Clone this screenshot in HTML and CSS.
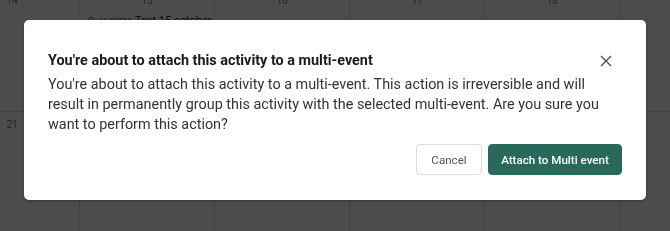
FILE: index.html
```html
<!DOCTYPE html>
<html>
<head>
<meta charset="utf-8">
<link rel="stylesheet" href="styles.css">
</head>
<body>
<div class="calendar">
  <div class="cell"><span class="num">14</span></div>
  <div class="cell"><span class="num">15</span>
    <div class="event"><span class="dot"></span><span class="time">10:00PM</span><span class="title">Test 15 october</span></div>
  </div>
  <div class="cell"><span class="num">16</span></div>
  <div class="cell"><span class="num">17</span></div>
  <div class="cell"><span class="num">18</span></div>
  <div class="cell"><span class="num">19</span></div>
  <div class="cell"><span class="num">20</span></div>
  <div class="cell"><span class="num">21</span></div>
  <div class="cell"><span class="num">22</span></div>
  <div class="cell"><span class="num">23</span></div>
  <div class="cell"><span class="num">24</span></div>
  <div class="cell"><span class="num">25</span></div>
  <div class="cell"><span class="num">26</span></div>
  <div class="cell"><span class="num">27</span></div>
</div>
<div class="overlay">
  <div class="dialog">
    <div class="header">
      <h2 class="heading">You're about to attach this activity to a multi-event</h2>
      <button class="close" aria-label="Close">
        <svg width="12" height="12" viewBox="0 0 12 12"><path d="M1 1 L11 11 M11 1 L1 11" stroke="#4a4a4a" stroke-width="1.3" fill="none"/></svg>
      </button>
    </div>
    <p class="body">You're about to attach this activity to a multi-event. This action is irreversible and will result in permanently group this activity with the selected multi-event. Are you sure you want to perform this action?</p>
    <div class="actions">
      <button class="btn btn-cancel">Cancel</button>
      <button class="btn btn-primary">Attach to Multi event</button>
    </div>
  </div>
</div>
</body>
</html>
```

FILE: styles.css
```css
html, body {
  margin: 0;
  padding: 0;
  width: 670px;
  height: 231px;
  overflow: hidden;
  font-family: Roboto, "Liberation Sans", sans-serif;
  background: #fff;
}
.calendar {
  display: grid;
  grid-template-columns: repeat(7, 135px);
  grid-auto-rows: 124px;
  margin-left: -55px;
  margin-top: -12px;
  width: 945px;
}
.cell {
  border-right: 1px solid #dcdcdc;
  border-bottom: 1px solid #dcdcdc;
  box-sizing: border-box;
  display: flex;
  flex-direction: column;
  align-items: center;
  padding-top: 8px;
}
.num {
  font-size: 10px;
  line-height: 10px;
  color: #7a7a7a;
}
.event {
  align-self: flex-start;
  display: flex;
  align-items: center;
  gap: 4px;
  margin-top: 8px;
  margin-left: 8px;
}
.dot {
  width: 5px;
  height: 5px;
  border-radius: 50%;
  border: 1px solid #2a6b5e;
}
.time {
  font-size: 8px;
  color: #444;
}
.title {
  font-size: 11px;
  color: #222;
}
.overlay {
  position: fixed;
  inset: 0;
  background: rgba(0, 0, 0, 0.7);
  display: flex;
  justify-content: center;
  align-items: flex-start;
  padding-top: 20px;
}
.dialog {
  width: 622px;
  height: 180px;
  box-sizing: border-box;
  background: #fff;
  border-radius: 5px;
  box-shadow: 0 1px 3px rgba(0, 0, 0, 0.35);
  padding: 32px 24px 25px 24px;
  display: flex;
  flex-direction: column;
}
.header {
  display: flex;
  align-items: center;
  justify-content: space-between;
}
.heading {
  margin: 0;
  font-size: 14.4px;
  line-height: 18px;
  font-weight: 700;
  color: #1a1a1a;
}
.close {
  border: 0;
  background: none;
  padding: 0;
  margin-right: 10px;
  width: 12px;
  height: 12px;
  display: flex;
}
.body {
  margin: 5px 0 0 0;
  font-size: 14.4px;
  line-height: 20px;
  color: #333;
}
.actions {
  margin-top: auto;
  display: flex;
  justify-content: flex-end;
  gap: 6px;
}
.btn {
  height: 31px;
  box-sizing: border-box;
  border-radius: 4px;
  font-family: Roboto, "Liberation Sans", sans-serif;
  font-size: 11.6px;
  padding: 0;
}
.btn-cancel {
  background: #fff;
  border: 1px solid #dcdcdc;
  color: #555;
  width: 66px;
}
.btn-primary {
  background: #29695c;
  border: 1px solid #29695c;
  color: #fff;
  font-weight: 500;
  width: 134px;
}
```
